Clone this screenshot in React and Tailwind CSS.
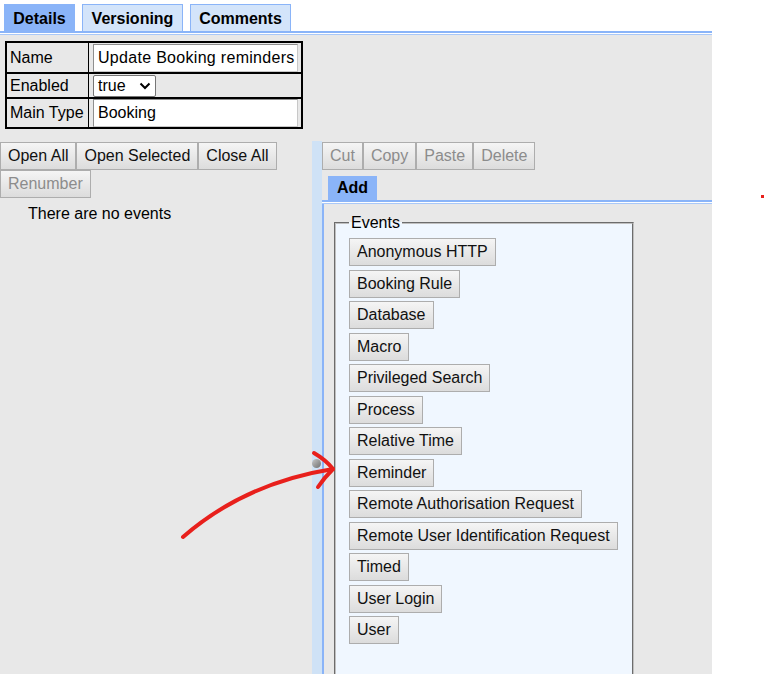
import React from "react";

const btn =
  "h-[28px] px-[7px] border border-[#adadad] bg-gradient-to-b from-[#f5f5f5] to-[#dcdcdc] flex items-center whitespace-nowrap leading-none";

function Btn({ children, disabled }) {
  return (
    <div className={btn + (disabled ? " text-[#8c8c8c]" : " text-[#111]")}>
      {children}
    </div>
  );
}

const events = [
  "Anonymous HTTP",
  "Booking Rule",
  "Database",
  "Macro",
  "Privileged Search",
  "Process",
  "Relative Time",
  "Reminder",
  "Remote Authorisation Request",
  "Remote User Identification Request",
  "Timed",
  "User Login",
  "User",
];

function TabLine() {
  return (
    <div className="flex flex-col">
      <div className="h-[2px] bg-[#8ab4f8]" />
      <div className="h-[1px] bg-white" />
      <div className="h-[1px] bg-[#a9c8f8]" />
    </div>
  );
}

export default function App() {
  return (
    <div className="relative w-[764px] h-[674px] overflow-hidden bg-white flex font-['Liberation_Sans',Arial,sans-serif] text-[16px] text-black">
      <div className="w-[712px] h-full flex flex-col">
        {/* tabs */}
        <div className="h-[31px] flex items-end gap-[7px] pl-[4px] bg-white">
          <div className="h-[27px] w-[71px] pt-[2px] bg-[#8ab4f8] flex items-center justify-center font-bold">
            Details
          </div>
          <div className="h-[27px] w-[101px] pt-[2px] bg-[#d3e4fa] border border-b-0 border-[#8ab4f8] flex items-center justify-center font-bold">
            Versioning
          </div>
          <div className="h-[27px] w-[101px] pt-[2px] bg-[#d3e4fa] border border-b-0 border-[#8ab4f8] flex items-center justify-center font-bold">
            Comments
          </div>
        </div>
        <TabLine />

        {/* body */}
        <div className="flex-1 bg-[#e8e8e8] flex flex-col min-h-0">
          {/* table */}
          <div className="pt-[6px] pl-[5px]">
            <div className="w-[298px] border-2 border-black flex flex-col">
              <div className="h-[31px] flex border-b-2 border-black">
                <div className="w-[82px] border-r border-black pl-[3px] flex items-center">Name</div>
                <div className="flex-1 flex items-center pl-[4px] pr-[3px]">
                  <div className="h-[28px] w-full bg-white border border-[#8f8f8f] border-b-[#c8c8c8] border-r-[#c8c8c8] pl-[4px] flex items-center whitespace-nowrap overflow-hidden tracking-[0.3px]">
                    Update Booking reminders
                  </div>
                </div>
              </div>
              <div className="h-[25px] flex border-b-2 border-black">
                <div className="w-[82px] border-r border-black pl-[3px] flex items-center">Enabled</div>
                <div className="flex-1 flex items-center pl-[4px]">
                  <div className="h-[22px] w-[63px] bg-white border border-[#767676] rounded-[2px] pl-[4px] pr-[4px] flex items-center justify-between">
                    <span>true</span>
                    <svg width="12" height="8" viewBox="0 0 12 8">
                      <path d="M1.5 1.5 L6 6 L10.5 1.5" fill="none" stroke="#000" strokeWidth="2" />
                    </svg>
                  </div>
                </div>
              </div>
              <div className="h-[28px] flex">
                <div className="w-[82px] border-r border-black pl-[3px] flex items-center">Main Type</div>
                <div className="flex-1 flex items-center pl-[4px] pr-[3px]">
                  <div className="h-[28px] w-full bg-white border border-[#8f8f8f] border-b-[#c8c8c8] border-r-[#c8c8c8] pl-[4px] flex items-center">
                    Booking
                  </div>
                </div>
              </div>
            </div>
          </div>

          {/* split */}
          <div className="flex-1 flex mt-[12px] min-h-0">
            {/* left */}
            <div className="w-[312px] flex flex-col pt-[1px]">
              <div className="flex">
                <Btn>Open All</Btn>
                <Btn>Open Selected</Btn>
                <Btn>Close All</Btn>
              </div>
              <div className="flex">
                <Btn disabled>Renumber</Btn>
              </div>
              <div className="pl-[28px] pt-[7px] leading-[18px]">There are no events</div>
            </div>
            {/* splitter */}
            <div className="w-[10px] bg-[#cfe2f6]" />
            {/* right */}
            <div className="flex-1 flex flex-col min-h-0 overflow-hidden pt-[1px]">
              <div className="flex">
                <Btn disabled>Cut</Btn>
                <Btn disabled>Copy</Btn>
                <Btn disabled>Paste</Btn>
                <Btn disabled>Delete</Btn>
              </div>
              <div className="flex pl-[6px] pt-[6px]">
                <div className="h-[24px] w-[49px] bg-[#8ab4f8] flex items-center justify-center font-bold">
                  Add
                </div>
              </div>
              <TabLine />
              <div className="flex-1 border-l-2 border-[#8ab4f8] pl-[10px] pt-[10px]">
                <fieldset className="w-[300px] h-[600px] border-2 [border-style:groove] border-[#c0c0c0] bg-[#f0f7ff] pl-[13px] pt-[6px]">
                  <legend className="px-[2px] leading-[18px]">Events</legend>
                  <div className="flex flex-col items-start gap-[3.5px]">
                    {events.map((e) => (
                      <Btn key={e}>{e}</Btn>
                    ))}
                  </div>
                </fieldset>
              </div>
            </div>
          </div>
        </div>
      </div>

      {/* overlays */}
      <div className="absolute left-[761px] top-[195px] w-[3px] h-[3px] bg-[#e8201c]" />
      <div className="absolute left-[312px] top-[459px] w-[9px] h-[9px] rounded-full bg-gradient-to-br from-[#c8c8c8] to-[#707070]" />
      <svg className="absolute left-0 top-0 pointer-events-none" width="764" height="674" viewBox="0 0 764 674">
        <path d="M183 537 Q245 483 333 469" fill="none" stroke="#e8201c" strokeWidth="4" strokeLinecap="round" />
        <path d="M314 453 Q326 460 333 469 Q324 478 318 487" fill="none" stroke="#e8201c" strokeWidth="4" strokeLinecap="round" strokeLinejoin="round" />
      </svg>
    </div>
  );
}
